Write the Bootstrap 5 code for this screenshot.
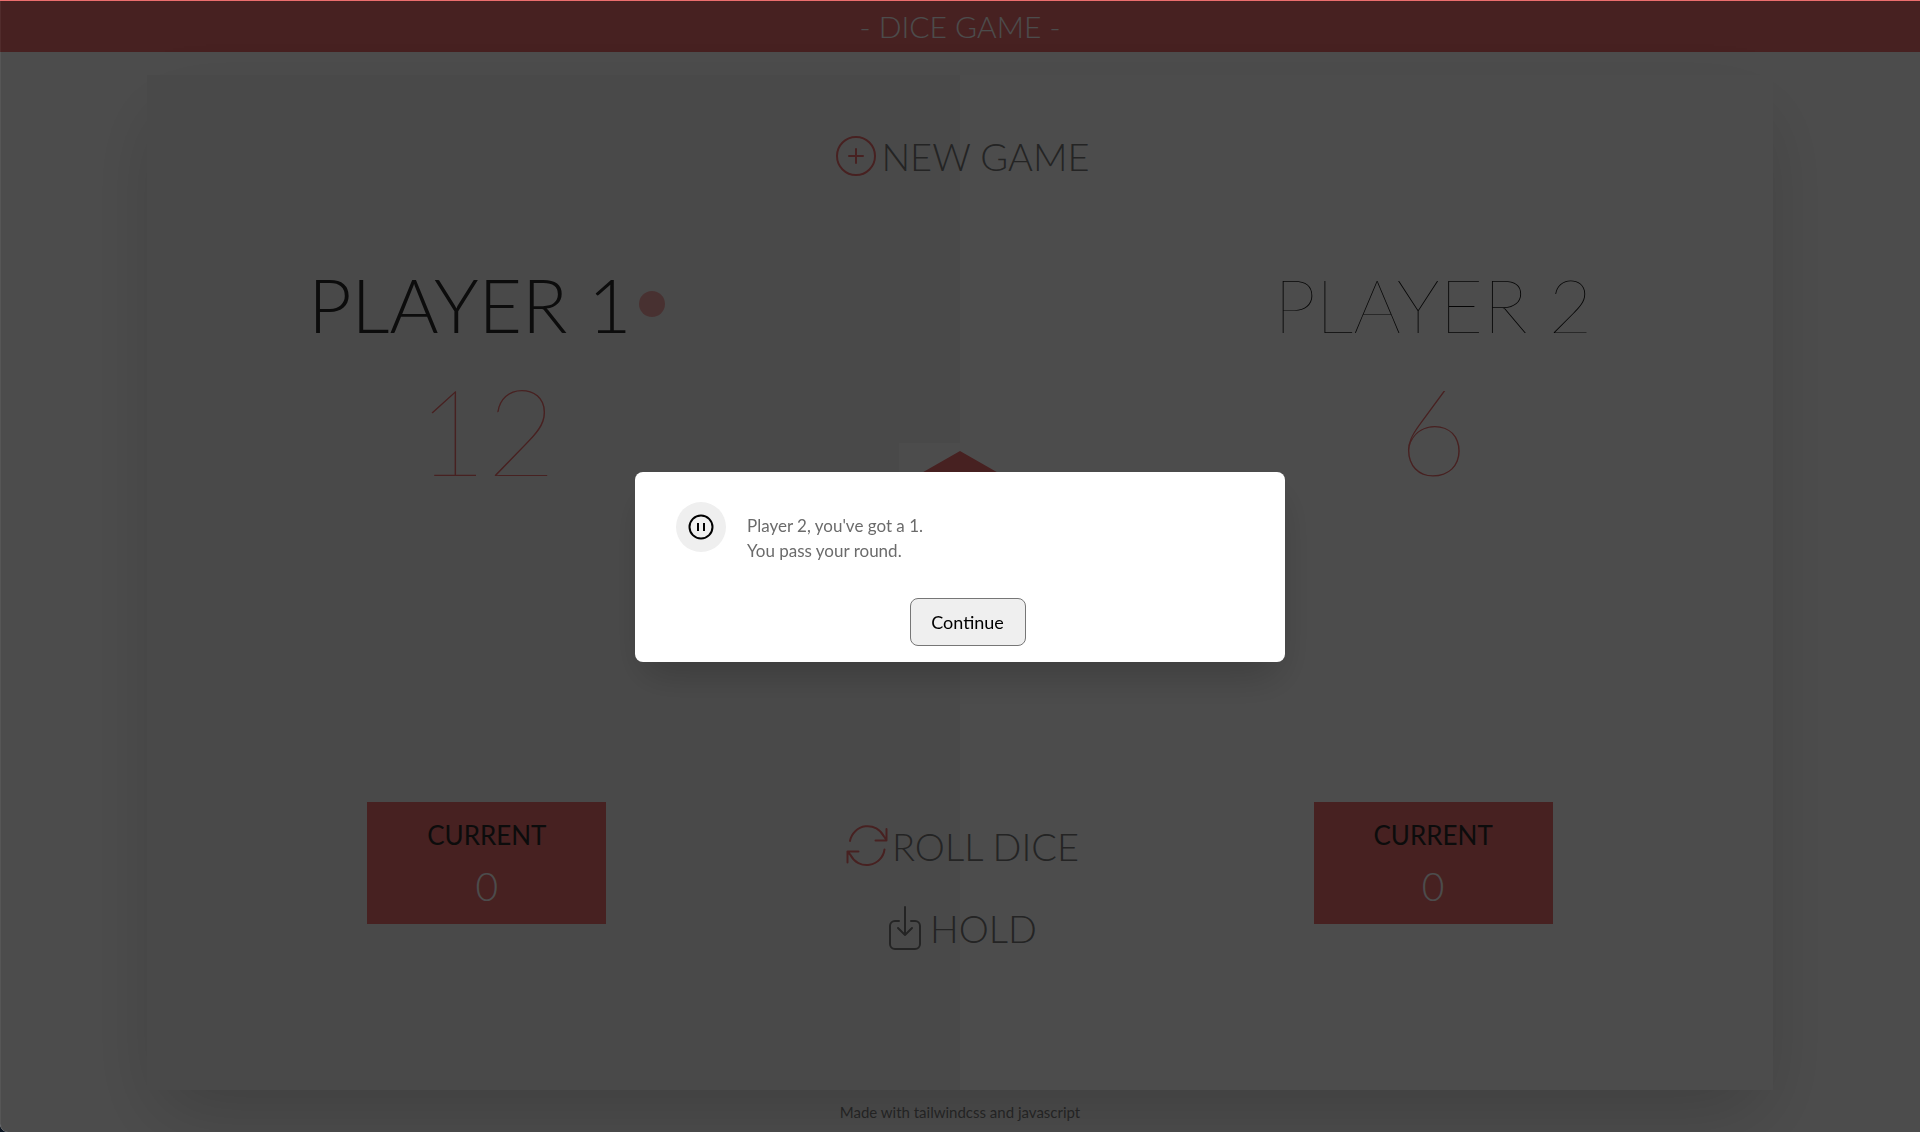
<!DOCTYPE html>
<html lang="en">
<head>
<meta charset="utf-8">
<meta name="viewport" content="width=device-width, initial-scale=1">
<title>Dice Game</title>
<link href="https://cdn.jsdelivr.net/npm/bootstrap@5.3.0/dist/css/bootstrap.min.css" rel="stylesheet">
<style>
  :root { --brand: #ed6e6e; --ink: #2b2b2b; --soft: #787878; }
  html { background: #0b1420; }
  body { font-family: Lato, sans-serif; color: var(--ink); background: #0b1420; }
  .page { min-height: 100vh; background: #fff; border-bottom-left-radius: 8px; overflow: hidden; }
  .topbar { background: var(--brand); height: 52px; font-size: 30px; font-weight: 300; line-height: 52px; }
  .board { width: 84.7%; margin-top: 23px; padding: 0 2px; background: linear-gradient(90deg, #f6f6f6 50%, #fff 50%); box-shadow: 0 32px 72px -12px rgba(0, 0, 0, .18); }
  .side { padding: 179px 0 166px; }
  .middle { padding: 52px 0 133px; }
  .player-name { font-size: 75px; line-height: 100px; font-weight: 100; color: #111; }
  .player-name.active { font-weight: 300; color: var(--ink); }
  .turn-dot { width: 26px; height: 26px; border-radius: 50%; background: var(--brand); opacity: .6; }
  .score { font-size: 120px; line-height: 152px; font-weight: 100; color: var(--brand); }
  .current { width: 239px; height: 122px; background: var(--brand); font-size: 26px; line-height: 34px; padding-top: 16px; }
  .current output { font-size: 39px; line-height: 68px; font-weight: 300; color: #fff; }
  .action { font-size: 38px; line-height: 58px; font-weight: 300; color: var(--soft); background: none; border: 0; padding: 0 0 0 5px; white-space: nowrap; }
  .action svg { flex: none; }
  .die { width: 122px; height: 122px; margin-top: 258px; background: #fff; }
  footer { height: 42px; line-height: 44px; font-size: 15px; color: #777; }
  .veil { position: fixed; inset: 1px 0 0 0; z-index: 1050; background: rgba(0, 0, 0, .7); border-left: 1px solid rgba(255, 255, 255, .05); border-bottom-left-radius: 8px; }
  .modal { z-index: 1055; padding-top: 2px; }
  .notice { max-width: 650px; }
  .notice .modal-content { border: 0; border-radius: 8px; box-shadow: 0 20px 40px -6px rgba(0, 0, 0, .2); padding: 30px 41px 16px; color: #6b6b6b; font-size: 17px; line-height: 25px; }
  .badge-round { width: 50px; height: 50px; border-radius: 50%; background: #efefef; }
  .notice-text { margin: 0 0 35px 21px; padding-top: 11px; }
  .continue { width: 116px; height: 48px; margin-left: 15px; background: #efefef; border: 1px solid #767676; border-radius: 8px; color: #000; font-size: 18px; }
</style>
<script src="https://cdn.jsdelivr.net/npm/bootstrap@5.3.0/dist/js/bootstrap.bundle.min.js"></script>
</head>
<body>
<div class="page d-flex flex-column">
  <header class="topbar text-center text-white">- DICE GAME -</header>

  <main class="board mx-auto flex-grow-1 d-flex">
    <div class="row g-0 flex-grow-1">
      <section class="side col-5 d-flex flex-column align-items-center">
        <h2 class="player-name active mb-0 d-flex align-items-center gap-2">PLAYER 1 <span class="turn-dot"></span></h2>
        <div class="score">12</div>
        <div class="current mt-auto d-flex flex-column align-items-center"><label for="now1">CURRENT</label><output id="now1">0</output></div>
      </section>
      <section class="middle col-2 d-flex flex-column align-items-center">
        <button type="button" class="action d-flex align-items-center gap-1">
          <svg width="42" height="42" viewBox="0 0 42 42" fill="none" stroke="#ed6e6e" stroke-width="2" stroke-linecap="round"><circle cx="21" cy="21" r="19"/><path d="M21 14v14M14 21h14"/></svg>
          NEW GAME
        </button>
        <div class="die">
          <svg width="122" height="122" viewBox="0 0 122 122"><path d="M61 8l49 28v50l-49 28-49-28V36z" fill="#ed6e6e"/></svg>
        </div>
        <button type="button" class="action d-flex align-items-center gap-1 mt-auto">
          <svg width="42" height="42" viewBox="0 0 42 42" fill="none" stroke="#ed6e6e" stroke-width="2" stroke-linecap="round" stroke-linejoin="round"><path d="M4 16A18 18 0 0 1 38 11.500L40.500 15M40.500 4v11.500H29.500M38.500 24.500A18 18 0 0 1 4.500 30L1.500 26.500M1.500 37.500V26.500H12.500"/></svg>
          ROLL DICE
        </button>
        <button type="button" class="action d-flex align-items-center gap-2 mt-4">
          <svg width="34" height="46" viewBox="0 0 34 46" fill="none" stroke="#787878" stroke-width="2" stroke-linecap="round" stroke-linejoin="round"><path d="M11 16H7a5 5 0 0 0-5 5v18a5 5 0 0 0 5 5h20a5 5 0 0 0 5-5V21a5 5 0 0 0-5-5h-4M17 2v28M10 23l7 7 7-7"/></svg>
          HOLD
        </button>
      </section>
      <section class="side col-5 d-flex flex-column align-items-center">
        <h2 class="player-name mb-0">PLAYER 2</h2>
        <div class="score">6</div>
        <div class="current mt-auto d-flex flex-column align-items-center"><label for="now2">CURRENT</label><output id="now2">0</output></div>
      </section>
    </div>
  </main>

  <footer class="text-center">Made with tailwindcss and javascript</footer>
</div>

<div class="veil"></div>
<div class="modal d-block" tabindex="-1" role="dialog" aria-modal="true" aria-labelledby="notice-text">
  <div class="modal-dialog modal-dialog-centered notice">
    <div class="modal-content">
      <div class="d-flex">
        <span class="badge-round d-flex align-items-center justify-content-center">
          <svg width="26" height="26" viewBox="0 0 26 26" fill="none" stroke="#000" stroke-width="2"><circle cx="13" cy="13" r="11.500"/><path d="M10 9v8M16 9v8"/></svg>
        </span>
        <p id="notice-text" class="notice-text">Player 2, you've got a 1.<br>You pass your round.</p>
      </div>
      <div class="text-center"><button type="button" class="continue">Continue</button></div>
    </div>
  </div>
</div>
</body>
</html>
